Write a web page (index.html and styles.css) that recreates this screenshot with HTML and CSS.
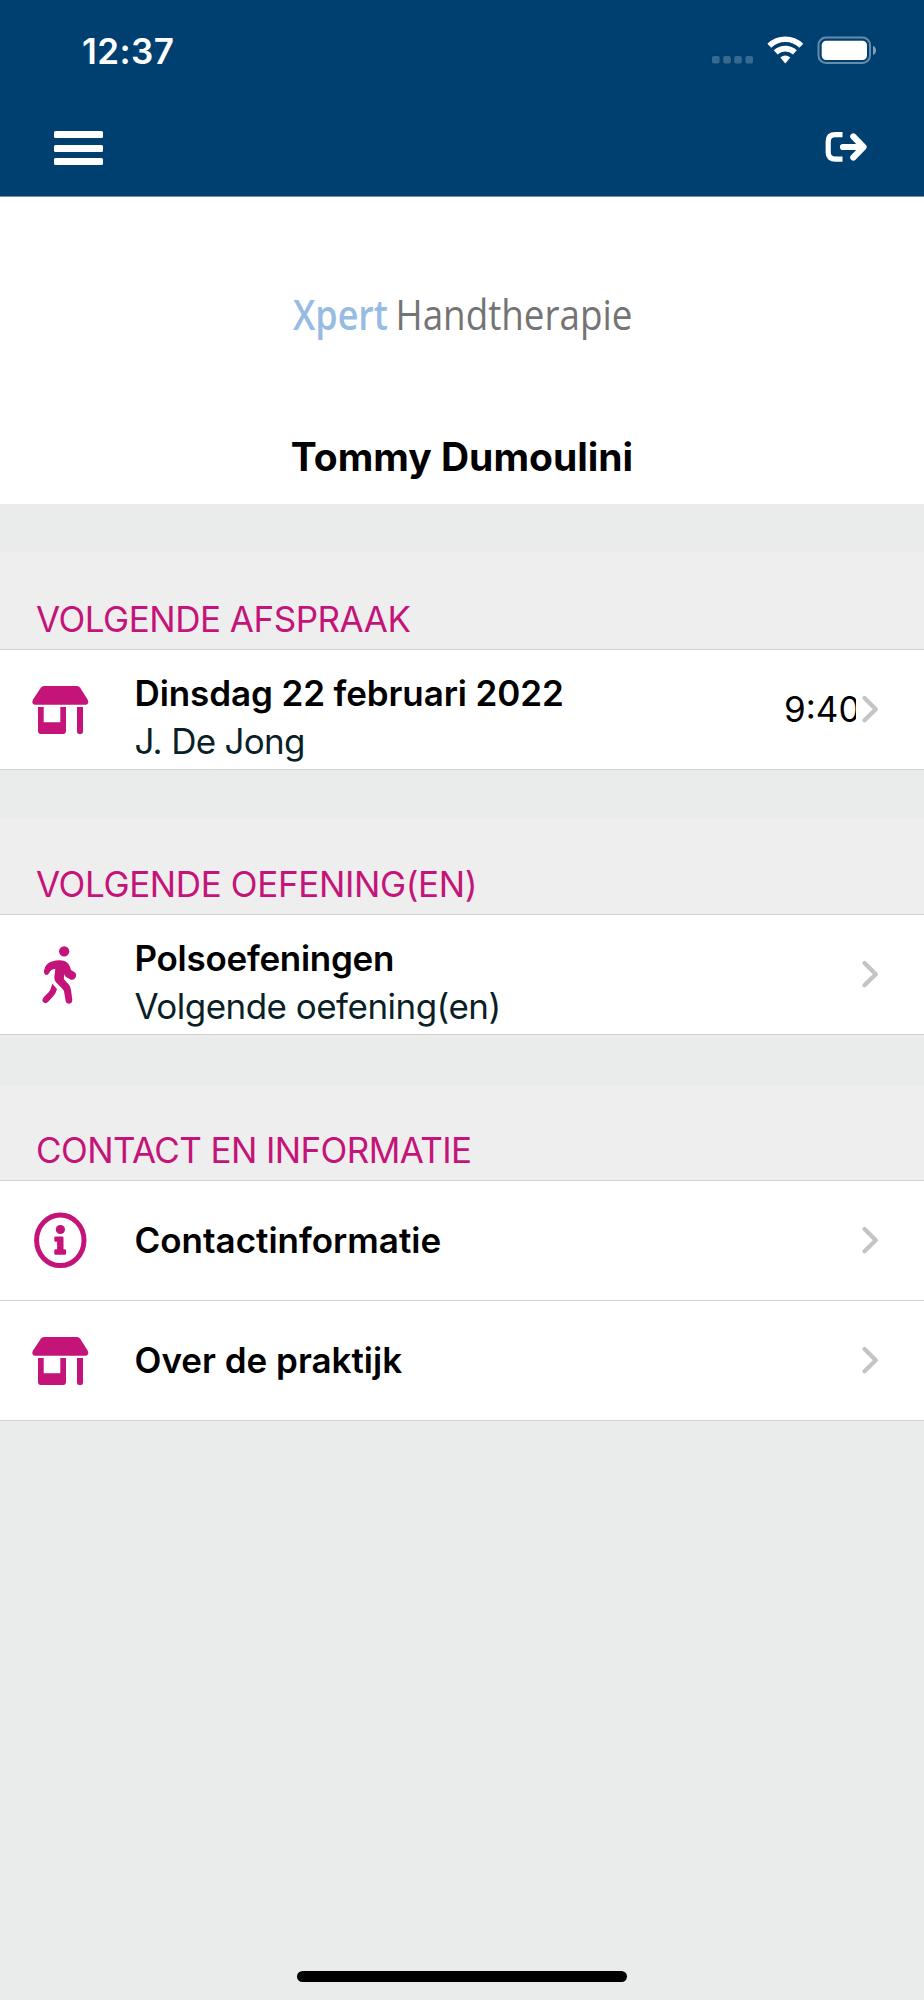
FILE: index.html
```html
<!DOCTYPE html>
<html lang="nl">
<head>
<meta charset="utf-8">
<title>Xpert Handtherapie</title>
<link rel="stylesheet" href="styles.css">
</head>
<body>
<svg class="defs" width="0" height="0" aria-hidden="true">
  <symbol id="store" viewBox="0 0 120 120">
    <path d="M44 37h33q2 0 3 1.500l7.600 12q2 4.500-2 5.300H35q-4-.8-2-5.300l8-12q1-1.500 3-1.500z"/>
    <path d="M38 58h5.700v15.300h16.600V58H66v24q0 3-3 3H41q-3 0-3-3z"/>
    <path d="M77 58h6v24.800q0 2.200-2.200 2.200h-1.600Q77 85 77 82.800z"/>
  </symbol>
  <symbol id="chevron" viewBox="0 0 18 30">
    <path d="M3.500 4 14.800 15.300 3.500 26.200" fill="none" stroke="#c4c4c6" stroke-width="4.300" stroke-linecap="round" stroke-linejoin="round"/>
  </symbol>
</svg>

<header class="topbar">
  <div class="status">
    <span class="clock">12:37</span>
    <svg width="168" height="30" viewBox="0 0 168 30">
      <g fill="#fff" fill-opacity=".22">
        <rect x="0" y="20" width="7.600" height="7.600" rx="2"/><rect x="11.200" y="20" width="7.600" height="7.600" rx="2"/><rect x="22.200" y="20" width="7.600" height="7.600" rx="2"/><rect x="33.400" y="20" width="7.600" height="7.600" rx="2"/>
      </g>
      <g fill="none" stroke="#fff" stroke-width="5.600">
        <path d="M57.300 9.700a23 23 0 0 1 32 0"/><path d="M63.700 16.400a14 14 0 0 1 19.200 0"/>
      </g>
      <path d="M68.300 21.600q5-4.200 10 0l-5 5.900z" fill="#fff"/>
      <rect x="106.500" y="1.500" width="51.500" height="25.500" rx="7.500" fill="none" stroke="#fff" stroke-opacity=".4" stroke-width="2"/>
      <rect x="109.700" y="4.700" width="45.300" height="19.300" rx="4.500" fill="#fff"/>
      <path d="M161 9.700q3 1.500 3 4.700t-3 4.700z" fill="#fff" fill-opacity=".5"/>
    </svg>
  </div>
  <nav class="nav">
    <div class="burger"><i></i><i></i><i></i></div>
    <svg width="42" height="32" viewBox="0 0 42 32" fill="none" stroke="#fff">
      <path d="M17.500 3.700H10.500Q3.200 3.700 3.200 10.500v11.100Q3.200 28.200 10.500 28.200H17.500" stroke-width="5.200"/>
      <path d="M18 16h18" stroke-width="6.200" stroke-linecap="round"/>
      <path d="M28.300 5.500 38.500 16 28.300 26.500" stroke-width="6.200" stroke-linecap="round" stroke-linejoin="round"/>
    </svg>
  </nav>
</header>

<section class="profile">
  <svg class="logo" width="340" height="60" viewBox="0 0 340 60">
    <text class="logo-a" x="1" y="44" textLength="95" lengthAdjust="spacingAndGlyphs">Xpert</text>
    <text class="logo-b" x="103.500" y="44" textLength="237" lengthAdjust="spacingAndGlyphs">Handtherapie</text>
  </svg>
  <h1 class="name">Tommy Dumoulini</h1>
</section>

<section class="group first">
  <h2 class="heading"><span class="h-one">VOLGENDE AFSPRAAK</span></h2>
  <div class="list">
    <div class="row">
      <svg class="icon"><use href="#store"/></svg>
      <div class="copy"><b class="t-date">Dinsdag 22 februari 2022</b><span class="s-name">J. De Jong</span></div>
      <span class="time">9:40</span>
      <svg class="chev"><use href="#chevron"/></svg>
    </div>
  </div>
</section>

<section class="group second">
  <h2 class="heading"><span class="h-two">VOLGENDE OEFENING(EN)</span></h2>
  <div class="list">
    <div class="row">
      <svg class="icon" viewBox="0 0 120 120">
        <g transform="translate(20 16) scale(.3333)">
          <circle cx="132.500" cy="64" r="15.500"/>
          <path d="M72 123Q74 109 82 102 96 91 118 91 138 91 146 103 150 109 153 120L164 127Q171 133 167 142 161 153 150 148L138 141Q134 138 133 132 131 141 132 148L148 166Q152 172 153 180L157 209Q157 219 148 221 139 221 137 213L132 184Q131 180 127 176L108 157Q102 150 103 142L106 116Q92 117 88 128 84 136 77 135 70 131 72 123Z"/>
          <path d="M97 161 111 177Q108 189 101 197L84 216Q76 223 69 216 65 209 71 202L86 187Q91 181 93 174Z"/>
        </g>
      </svg>
      <div class="copy"><b class="t-pols">Polsoefeningen</b><span class="s-volg">Volgende oefening(en)</span></div>
      <svg class="chev"><use href="#chevron"/></svg>
    </div>
  </div>
</section>

<section class="group third">
  <h2 class="heading"><span class="h-three">CONTACT EN INFORMATIE</span></h2>
  <div class="list">
    <div class="row">
      <svg class="icon" viewBox="0 0 120 120">
        <ellipse cx="60.300" cy="60.300" rx="23.700" ry="25.300" fill="none" stroke="#c41479" stroke-width="5"/>
        <circle cx="60.400" cy="49.500" r="4.600"/>
        <path d="M55.500 56.500h6.800q1.200 0 1.200 1.200v11.500h1.300q1.200 0 1.200 1.200v3.200q0 1.200-1.200 1.200h-9.300q-1.200 0-1.200-1.200v-3.200q0-1.200 1.200-1.200h1.600v-7.400h-1.600q-1.200 0-1.200-1.200v-2.900q0-1.200 1.200-1.200z"/>
      </svg>
      <div class="copy"><b>Contactinformatie</b></div>
      <svg class="chev"><use href="#chevron"/></svg>
    </div>
    <div class="row">
      <svg class="icon icon-up"><use href="#store"/></svg>
      <div class="copy"><b>Over de praktijk</b></div>
      <svg class="chev"><use href="#chevron"/></svg>
    </div>
  </div>
</section>

<footer class="foot"><div class="home"></div></footer>
</body>
</html>
```
FILE: styles.css
```css
* { box-sizing: border-box; }
body {
  margin: 0;
  width: 924px;
  height: 2000px;
  overflow: hidden;
  display: flex;
  flex-direction: column;
  background: #eaeceb;
  color: #000;
  font: 35px/48px Inter, "Liberation Sans", sans-serif;
}
.defs { display: none; }
.topbar { height: 196px; flex: none; background: #004070; box-shadow: 0 1px 0 #6f93af; z-index: 1; }
.status { display: flex; justify-content: space-between; height: 100px; padding: 36px 44px 0 82px; }
.clock { color: #fff; font-weight: 600; line-height: 30px; height: 30px; letter-spacing: .4px; }
.nav { display: flex; justify-content: space-between; padding: 31px 57px 0 53.500px; }
.burger { width: 49.500px; display: flex; flex-direction: column; gap: 6.500px; }
.burger i { height: 7px; border-radius: 1.500px; background: #fff; }
.profile { height: 308px; flex: none; background: #fff; display: flex; flex-direction: column; align-items: center; }
.logo { margin-top: 90px; flex: none; overflow: visible; }
.logo text { font-family: "Open Sans", sans-serif; font-size: 42px; }
.logo .logo-a { fill: #97bce3; font-weight: 600; }
.logo .logo-b { fill: #747474; font-weight: 400; }
.name { margin: 87px 0 0; font-size: 39px; line-height: 48px; font-weight: 700; white-space: nowrap; }
.group { flex: none; padding-top: 50px; }
.group.first { padding-top: 48px; }
.group.second { padding-top: 49px; }
.heading { margin: 0; height: 95px; padding: 41px 0 0 36px; background: #eee; color: #c41479; font-size: 35px; line-height: 48px; font-weight: 400; white-space: nowrap; }
.first .heading { height: 97px; padding-top: 43px; }
.h-one { letter-spacing: -.48px; }
.h-two { letter-spacing: -.37px; }
.h-three { letter-spacing: -.6px; }
.list { background: #fff; border-bottom: 1px solid #d2d2d3; }
.row { height: 120px; display: flex; align-items: center; border-top: 1px solid #d2d2d3; padding-right: 45px; }
.icon { width: 120px; height: 120px; flex: none; margin-top: -1px; fill: #c41479; }
.icon-up { margin-top: -2px; }
.copy { flex: 1; padding-left: 14.500px; display: flex; flex-direction: column; white-space: nowrap; }
.row b { font-weight: 600; }
.copy span { color: #0a1f27; }
.copy:has(span) { padding-top: 14px; }
.copy:not(:has(span)) { padding-bottom: 2px; }
.t-date { letter-spacing: -.1px; }
.t-pols { letter-spacing: -.27px; }
.s-name { letter-spacing: -.7px; }
.s-volg { letter-spacing: -.53px; }
.time { width: 72px; margin-top: -2px; overflow: hidden; white-space: nowrap; }
.chev { width: 18px; height: 30px; margin: -1px 0 0 5px; flex: none; }
.foot { margin-top: auto; padding-bottom: 18px; display: flex; justify-content: center; }
.home { width: 330px; height: 11px; border-radius: 6px; background: #000; }
```
